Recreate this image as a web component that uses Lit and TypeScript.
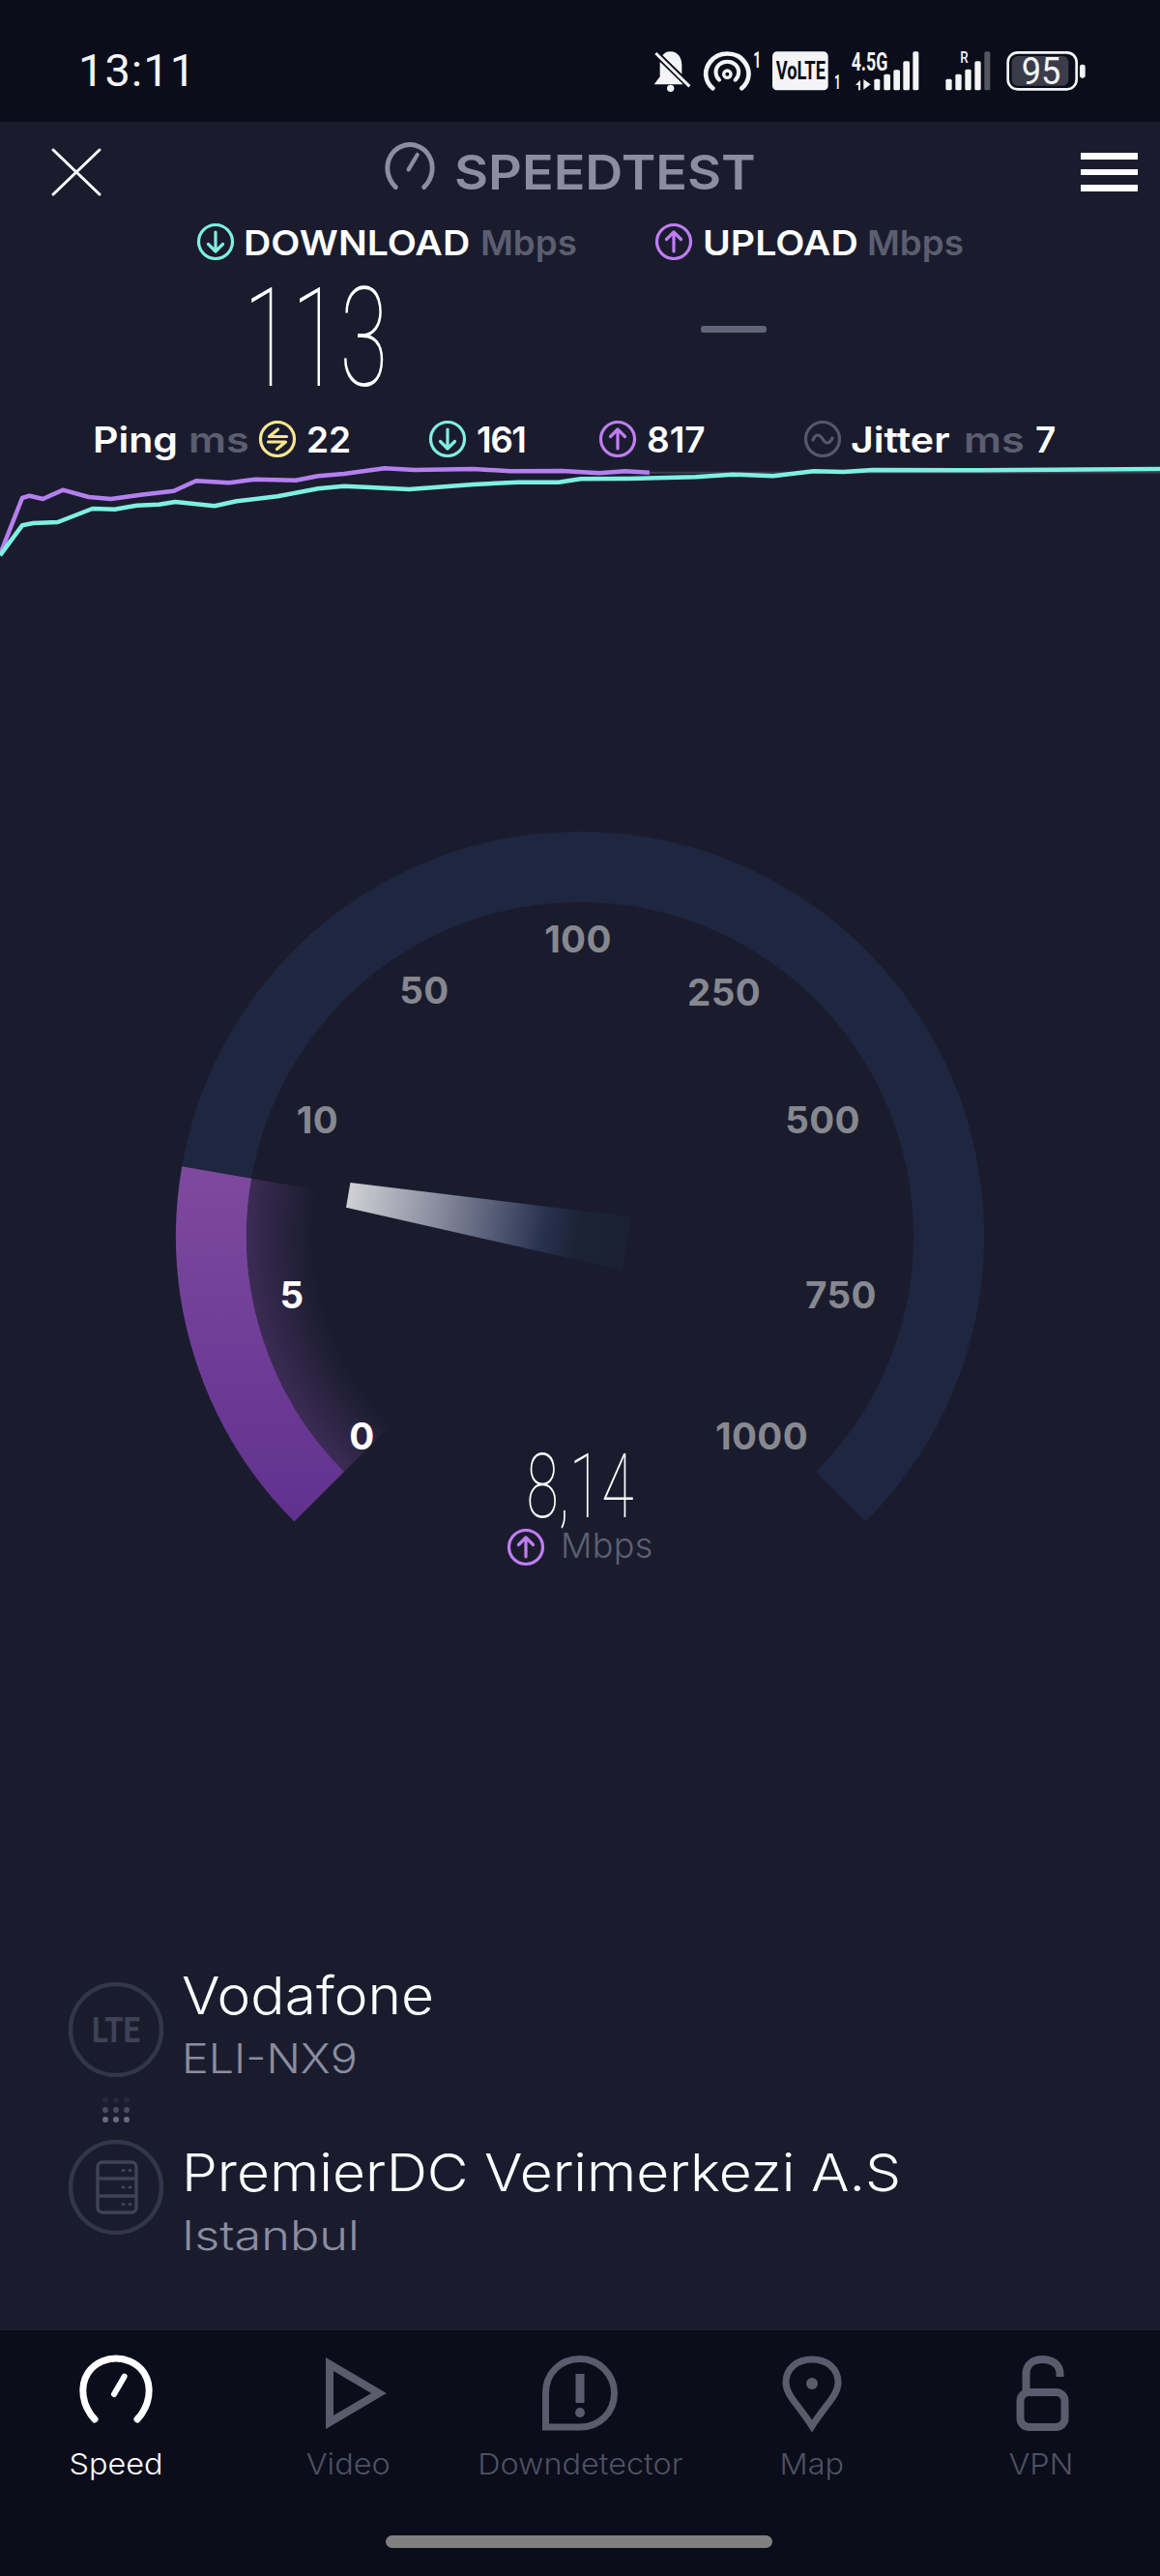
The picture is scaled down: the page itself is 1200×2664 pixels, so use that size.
import { LitElement, html, css, svg } from "lit";
import { customElement } from "lit/decorators.js";

const purplePts = [[0,1000],[30,825],[40,818],[58,828],[85,800],[120,822],[150,828],[190,815],[235,803],[265,772],[310,778],[345,767],[400,770],[430,757],[465,750],[520,733],[560,738],[640,735],[690,742],[760,741],[810,748],[845,742],[878,746]];
const cyanPts = [[0,1003],[30,910],[45,903],[78,900],[125,858],[155,860],[185,848],[215,845],[237,837],[290,850],[320,835],[375,820],[430,796],[465,788],[500,792],[553,798],[640,783],[700,776],[755,776],[785,766],[850,765],[940,760],[990,752],[1045,757],[1100,742],[1140,744],[1180,738],[1300,739],[1568,735]];
const toPoints = (p: number[][]) => p.map(([x, y]) => `${(x / 1.3067).toFixed(1)},${(240 + y / 3 - 478).toFixed(1)}`).join(" ");

const ticks = [
  { t: "100", x: 598, y: 985 }, { t: "50", x: 439, y: 1038 }, { t: "250", x: 749, y: 1040 },
  { t: "10", x: 328.5, y: 1172 }, { t: "500", x: 851, y: 1172 }, { t: "5", x: 302, y: 1353, on: true },
  { t: "750", x: 870, y: 1353 }, { t: "0", x: 374.5, y: 1499, on: true }, { t: "1000", x: 788, y: 1499 },
];

function circle(color: string, inner: unknown) {
  return html`<svg class="ci" viewBox="0 0 40 40" fill="none" stroke=${color} stroke-width="3.2" stroke-linecap="round" stroke-linejoin="round"><circle cx="20" cy="20" r="17.5"></circle>${inner}</svg>`;
}
const down = svg`<path d="M20 10V30M12.5 22.5L20 30L27.5 22.5"></path>`;
const up = svg`<path d="M20 30V10M12.5 17.5L20 10L27.5 17.5"></path>`;
const ping = svg`<path d="M29.5 17.500H11.500L20.500 10M10.500 23H28.500L19.500 30.500"></path>`;
const jitter = svg`<path d="M10 21C13 14 17 15 20 20C23 25 27 26 30 19"></path>`;
const CY = "#7ef0e2", PU = "#c07df2", YE = "#f9e78f", GR = "#565869";

@customElement("app-root")
export class AppRoot extends LitElement {
  static styles = css`
    :host { display: block; width: 1200px; height: 2664px; overflow: hidden; font-family: Inter, "Noto Sans", sans-serif; background: #1a1c2e; color: #fff; }
    .screen { width: 1200px; height: 2664px; display: flex; flex-direction: column; }
    .status { height: 126px; flex: none; background: #0b0d1a; display: flex; align-items: flex-start; justify-content: space-between; box-sizing: border-box; padding: 30px 60px 0 81px; }
    .time { font-family: Roboto, sans-serif; font-size: 47px; line-height: 86px; color: #f4f4f6; letter-spacing: 1px; }
    .main { flex: 1; min-height: 0; display: flex; flex-direction: column; }
    .head { height: 100px; flex: none; display: flex; align-items: center; padding: 0 23px 0 52px; }
    .close { width: 54px; height: 52px; margin-top: 4px; }
    .brand { display: flex; align-items: center; gap: 18px; margin-left: 290px; color: #8c8e9f; font-size: 50px; font-weight: 600; }
    .brand svg { width: 56px; height: 56px; margin-top: -4px; }
    .brand span { margin-top: 4px; transform: scaleX(1.08); transform-origin: left center; }
    .burger { width: 59px; display: flex; flex-direction: column; gap: 10px; margin: 4px 0 0 auto; }
    .burger i { display: block; height: 6.5px; background: #fff; }
    .labels { height: 48px; flex: none; display: grid; grid-template-columns: 49px 245px 180px 50px 170px auto; align-items: center; padding-left: 203px; font-size: 36px; font-weight: 600; }
    .labels span { margin-top: 2px; transform: scaleX(1.09); transform-origin: left center; }
    .labels .dim { transform: scaleX(1.02); }
    .ci { display: block; width: 40px; height: 40px; flex: none; }
    .dim { color: #5c5e70; }
    .vals { height: 156px; flex: none; display: flex; }
    .big { display: block; font-family: Roboto, sans-serif; font-weight: 100; font-size: 142px; line-height: 156px; transform: scaleX(0.64); transform-origin: left center; margin-left: 252px; width: 300px; margin-top: -1px; }
    .dash { width: 68px; height: 7px; background: #62647a; border-radius: 3px; margin: 63px 0 0 173px; }
    .stats { height: 48px; flex: none; display: grid; grid-template-columns: 99px 72px 50px 126px 50px 126px 50px 162px 49px 117px 74px auto; align-items: center; font-size: 37px; font-weight: 600; padding-left: 96px; }
    .stats .w { transform: scaleX(1.11); transform-origin: left center; }
    .stats .dim { transform: scaleX(1.17); transform-origin: left center; }
    .stats .narrow { letter-spacing: -1.5px; }
    .chart { display: block; width: 1200px; height: 112px; flex: none; }
    .gauge { display: block; width: 1200px; height: 790px; margin-top: 260px; flex: none; }
    .tick { font-family: Inter, sans-serif; font-size: 38.5px; font-weight: 700; fill: #87888f; text-anchor: middle; letter-spacing: 0.4px; }
    .tick.on { fill: #fff; }
    .speed { font-family: Roboto, sans-serif; font-weight: 100; font-size: 92px; fill: #fff; text-anchor: middle; }
    .unit { font-family: Inter, sans-serif; font-size: 36px; font-weight: 300; fill: #5e6072; letter-spacing: 0.3px; }
    .info { flex: 1; min-height: 0; padding: 0 0 0 71px; display: flex; flex-direction: column; margin-top: 392px; }
    .row { display: flex; gap: 19px; height: 130px; align-items: flex-start; }
    .row .ic { width: 98px; height: 98px; flex: none; margin-top: 18px; }
    .name { font-size: 54px; font-weight: 300; line-height: 64px; transform: scaleX(1.087); transform-origin: left center; white-space: nowrap; }
    .sub { font-size: 42px; font-weight: 300; color: #8b8da0; line-height: 50px; margin-top: 8px; transform: scaleX(1.11); transform-origin: left center; }
    .sub.wide { transform: scaleX(1.2); }
    .srv { margin-top: 20px; }
    .dots { display: block; width: 98px; height: 33px; }
    .nav { height: 254px; flex: none; background: #0b0d1a; position: relative; display: grid; grid-template-columns: repeat(5, 240px); align-content: start; padding-top: 25px; box-sizing: border-box; }
    .tab { display: flex; flex-direction: column; align-items: center; color: #4f5163; font-size: 30px; font-weight: 300; }
    .tab.on { color: #fff; }
    .tab svg { width: 80px; height: 80px; }
    .tab span { margin-top: 15px; line-height: 36px; transform: scaleX(1.08); }
    .tab.vpn span { margin-right: 6px; }
    .home { position: absolute; left: 399px; top: 212px; width: 400px; height: 13px; border-radius: 7px; background: #808080; }
  `;

  private statusIcons() {
    return html`<svg width="480" height="80" viewBox="0 0 1440 240" style="display:block">
      <path fill="#f4f4f6" d="M100 70C126 70 136 92 136 112V148L148 172H50L68 148V112C68 92 76 70 100 70Z"/>
      <circle cx="101" cy="184" r="11" fill="#f4f4f6"/>
      <path d="M50 70L165 182" stroke="#0b0d1a" stroke-width="20"/>
      <path d="M55 75L160 178" stroke="#f4f4f6" stroke-width="9"/>
      <g fill="none" stroke="#f4f4f6" stroke-linecap="round">
        <path d="M232 184C206 162 204 128 224 102C250 68 305 68 330 102C350 128 348 162 322 184" stroke-width="14"/>
        <path d="M252 158C238 144 238 122 252 110C266 98 288 98 302 110C316 122 316 144 302 158" stroke-width="12"/>
        <circle cx="277" cy="140" r="11" stroke-width="10"/>
      </g>
      <g font-family="Roboto, sans-serif" font-weight="700" fill="#f4f4f6">
        <text x="358" y="120" font-size="73" textLength="24" lengthAdjust="spacingAndGlyphs">1</text>
        <rect x="417" y="70" width="173" height="120" rx="14"/>
        <text x="428" y="155" font-size="78" fill="#0b0d1a" textLength="154" lengthAdjust="spacingAndGlyphs">VoLTE</text>
        <text x="609" y="185" font-size="60" textLength="20" lengthAdjust="spacingAndGlyphs">1</text>
        <text x="662" y="128" font-size="76" textLength="113" lengthAdjust="spacingAndGlyphs">4.5G</text>
        <text x="1000" y="105" font-size="50" textLength="25" lengthAdjust="spacingAndGlyphs" font-weight="500">R</text>
      </g>
      <path fill="#f4f4f6" d="M675 174L690 158V190H684V174ZM700 156V188L722 172Z"/>
      <g fill="#f4f4f6">
        <rect x="733" y="155" width="18" height="35" rx="5"/><rect x="763" y="140" width="20" height="50" rx="5"/>
        <rect x="793" y="127" width="20" height="63" rx="5"/><rect x="823" y="100" width="20" height="90" rx="5"/>
        <rect x="853" y="70" width="18" height="120" rx="5"/>
        <rect x="955" y="155" width="19" height="35" rx="5"/><rect x="985" y="140" width="19" height="50" rx="5"/>
        <rect x="1015" y="125" width="19" height="65" rx="5"/><rect x="1045" y="100" width="19" height="90" rx="5"/>
      </g>
      <rect x="1075" y="70" width="18" height="120" rx="5" fill="#55565f"/>
      <rect x="1160" y="84" width="176" height="92" rx="18" fill="#3b3c49"/>
      <rect x="1148" y="73" width="213" height="114" rx="30" fill="none" stroke="#f4f4f6" stroke-width="8"/>
      <rect x="1371" y="110" width="17" height="42" rx="7" fill="#f4f4f6"/>
      <text x="1190" y="172" font-family="Roboto, sans-serif" font-size="118" fill="#f4f4f6" textLength="122" lengthAdjust="spacingAndGlyphs">95</text>
    </svg>`;
  }

  private gauge() {
    // svg local origin: page (0,850)
    const cx = 600, cy = 428, R = 381.5;
    const pt = (r: number, deg: number) => {
      const a = (deg * Math.PI) / 180;
      return `${(cx + r * Math.cos(a)).toFixed(2)} ${(cy + r * Math.sin(a)).toFixed(2)}`;
    };
    const start = 135, split = 189.9, end = 405;
    return html`<svg class="gauge" viewBox="0 0 1200 790">
      <defs>
        <linearGradient id="pg" x1="0" y1="340" x2="0" y2="730" gradientUnits="userSpaceOnUse"><stop offset="0" stop-color="#7f4b9f"/><stop offset="1" stop-color="#61308f"/></linearGradient>
        <radialGradient id="glow" cx="600" cy="428" r="345" gradientUnits="userSpaceOnUse"><stop offset="0.8" stop-color="#8a4fb0" stop-opacity="0"/><stop offset="1" stop-color="#8a4fb0" stop-opacity="0.3"/></radialGradient>
        <linearGradient id="ng" x1="360" y1="386" x2="650" y2="436" gradientUnits="userSpaceOnUse"><stop offset="0" stop-color="#d0d0d4"/><stop offset="0.3" stop-color="#8d90a2"/><stop offset="0.7" stop-color="#273150"/><stop offset="0.82" stop-color="#1c2334"/><stop offset="1" stop-color="#1b2132"/></linearGradient>
      </defs>
      <path d="M${pt(R, split)} A${R} ${R} 0 1 1 ${pt(R, end)}" fill="none" stroke="#1f2640" stroke-width="73"/>
      <path d="M${pt(R, start)} A${R} ${R} 0 0 1 ${pt(R, split)}" fill="none" stroke="url(#pg)" stroke-width="73"/>
      <path d="M${cx} ${cy} L${pt(345, start)} A345 345 0 0 1 ${pt(345, split)} Z" fill="url(#glow)"/>
      <polygon points="362.4,373 358,398.7 643.7,463.5 652.3,408.4" fill="url(#ng)"/>
      ${ticks.map((t) => svg`<text class="tick ${t.on ? "on" : ""}" x=${t.x} y=${t.y - 850}>${t.t}</text>`)}
      <text class="speed" x="0" y="719" transform="translate(600 0) scale(0.66 1)">8,14</text>
      <g transform="translate(524 730)" fill="none" stroke=${PU} stroke-width="3.2" stroke-linecap="round" stroke-linejoin="round"><circle cx="20" cy="20" r="17.5"/>${up}</g>
      <text class="unit" x="580" y="761">Mbps</text>
    </svg>`;
  }

  render() {
    return html`<div class="screen">
      <div class="status"><div class="time">13:11</div><div class="sicons">${this.statusIcons()}</div></div>
      <div class="main">
        <div class="head">
          <svg class="close" viewBox="0 0 54 52" fill="none" stroke="#fff" stroke-width="3" stroke-linecap="round"><path d="M3 3L51 49M51 3L3 49"/></svg>
          <div class="brand">
            <svg viewBox="0 0 80 80" fill="none" stroke="#8c8e9f" stroke-width="7" stroke-linecap="round"><path d="M19 68C6 55 3 36 12 21C20 8 33 5 40 5C47 5 60 8 68 21C77 36 74 55 61 68"/><path d="M38 42L51 20" stroke-width="6"/></svg>
            <span>SPEEDTEST</span>
          </div>
          <div class="burger"><i></i><i></i><i></i></div>
        </div>
        <div class="labels">
          ${circle(CY, down)}<span>DOWNLOAD</span><span class="dim">Mbps</span>
          ${circle(PU, up)}<span>UPLOAD</span><span class="dim">Mbps</span>
        </div>
        <div class="vals"><div><span class="big">113</span></div><div class="dash"></div></div>
        <div class="stats">
          <span class="w">Ping</span><span class="dim">ms</span>
          ${circle(YE, ping)}<span>22</span>
          ${circle(CY, down)}<span class="narrow">161</span>
          ${circle(PU, up)}<span>817</span>
          ${circle(GR, jitter)}<span class="w">Jitter</span><span class="dim">ms</span><span>7</span>
        </div>
        <svg class="chart" viewBox="0 0 1200 112" fill="none" stroke-width="4.500" stroke-linejoin="round">
          <path d="M672 ${240 + 746 / 3 - 478}H1200" stroke="#3b3d4e" stroke-width="2"/>
          <polyline points=${toPoints(purplePts)} stroke="#b57ff0"/>
          <polyline points=${toPoints(cyanPts)} stroke="#7ef0e2"/>
        </svg>
        ${this.gauge()}
        <div class="info">
          <div class="row">
            <svg class="ic" viewBox="0 0 98 98" fill="none"><circle cx="49" cy="49" r="47" stroke="#33364a" stroke-width="4.5"/><text x="49" y="62" text-anchor="middle" font-family="Roboto, sans-serif" font-weight="700" font-size="36" fill="#3f4256" textLength="50" lengthAdjust="spacingAndGlyphs">LTE</text></svg>
            <div><div class="name">Vodafone</div><div class="sub">ELI-NX9</div></div>
          </div>
          <svg class="dots" viewBox="0 0 98 33">
            ${[0, 1, 2].map((r) => [38, 49, 60].map((x) => svg`<circle cx=${x} cy=${r * 10 + 10} r="3" fill="#6b6d7e" opacity=${[0.15, 0.6, 1][r]}></circle>`))}
          </svg>
          <div class="row">
            <svg class="ic" viewBox="0 0 98 98" fill="none" stroke="#3f4256"><circle cx="49" cy="49" r="47" stroke="#33364a" stroke-width="4.5"/><rect x="30" y="23" width="40" height="52" rx="5" stroke-width="3.5"/><path d="M30 40H70M30 58H70" stroke-width="3.5"/><path d="M56 31.500H57M63 31.500H64M56 49H57M63 49H64M56 66.500H57M63 66.500H64" stroke-width="3" stroke-linecap="round"/></svg>
            <div class="srv"><div class="name">PremierDC Verimerkezi A.S</div><div class="sub wide">Istanbul</div></div>
          </div>
        </div>
        <div class="nav">
          <div class="tab on"><svg viewBox="0 0 80 80" fill="none" stroke="#fff" stroke-width="7" stroke-linecap="round"><path d="M18 67C5 53 2 33 11 19C19 7 32 4 40 4C48 4 61 7 69 19C78 33 75 53 62 67"/><path d="M38 41L53 26" transform="rotate(-15 38 41)" stroke-width="6"/></svg><span>Speed</span></div>
          <div class="tab"><svg viewBox="0 0 80 80" fill="none" stroke="#5a5c6e" stroke-width="8"><path d="M21 10V70L72 40Z"/></svg><span>Video</span></div>
          <div class="tab"><svg viewBox="0 0 80 80" fill="none" stroke="#5a5c6e" stroke-width="7"><path d="M4.500 40C4.500 19 20 4.500 40 4.500C60 4.500 75.500 21 75.500 40C75.500 60 60 75 40 75H4.500Z"/><path d="M40 20V50" stroke-width="9"/><circle cx="40" cy="60" r="5" fill="#5a5c6e" stroke="none"/></svg><span>Downdetector</span></div>
          <div class="tab"><svg viewBox="0 0 80 80" fill="none" stroke="#5a5c6e" stroke-width="7"><path d="M40 74C26 52 13 42 13 29C13 14 25 5 40 5C55 5 67 14 67 29C67 42 54 52 40 74Z"/><circle cx="40" cy="30" r="6" fill="#5a5c6e" stroke="none"/></svg><span>Map</span></div>
          <div class="tab vpn"><svg viewBox="0 0 80 80" fill="none" stroke="#5a5c6e" stroke-width="8"><rect x="15.500" y="39" width="46" height="36" rx="9"/><path d="M21.500 38V20C21.500 10 29 5 38.500 5C48 5 56.500 10 56.500 20V23"/></svg><span>VPN</span></div>
          <div class="home"></div>
        </div>
      </div>
    </div>`;
  }
}
